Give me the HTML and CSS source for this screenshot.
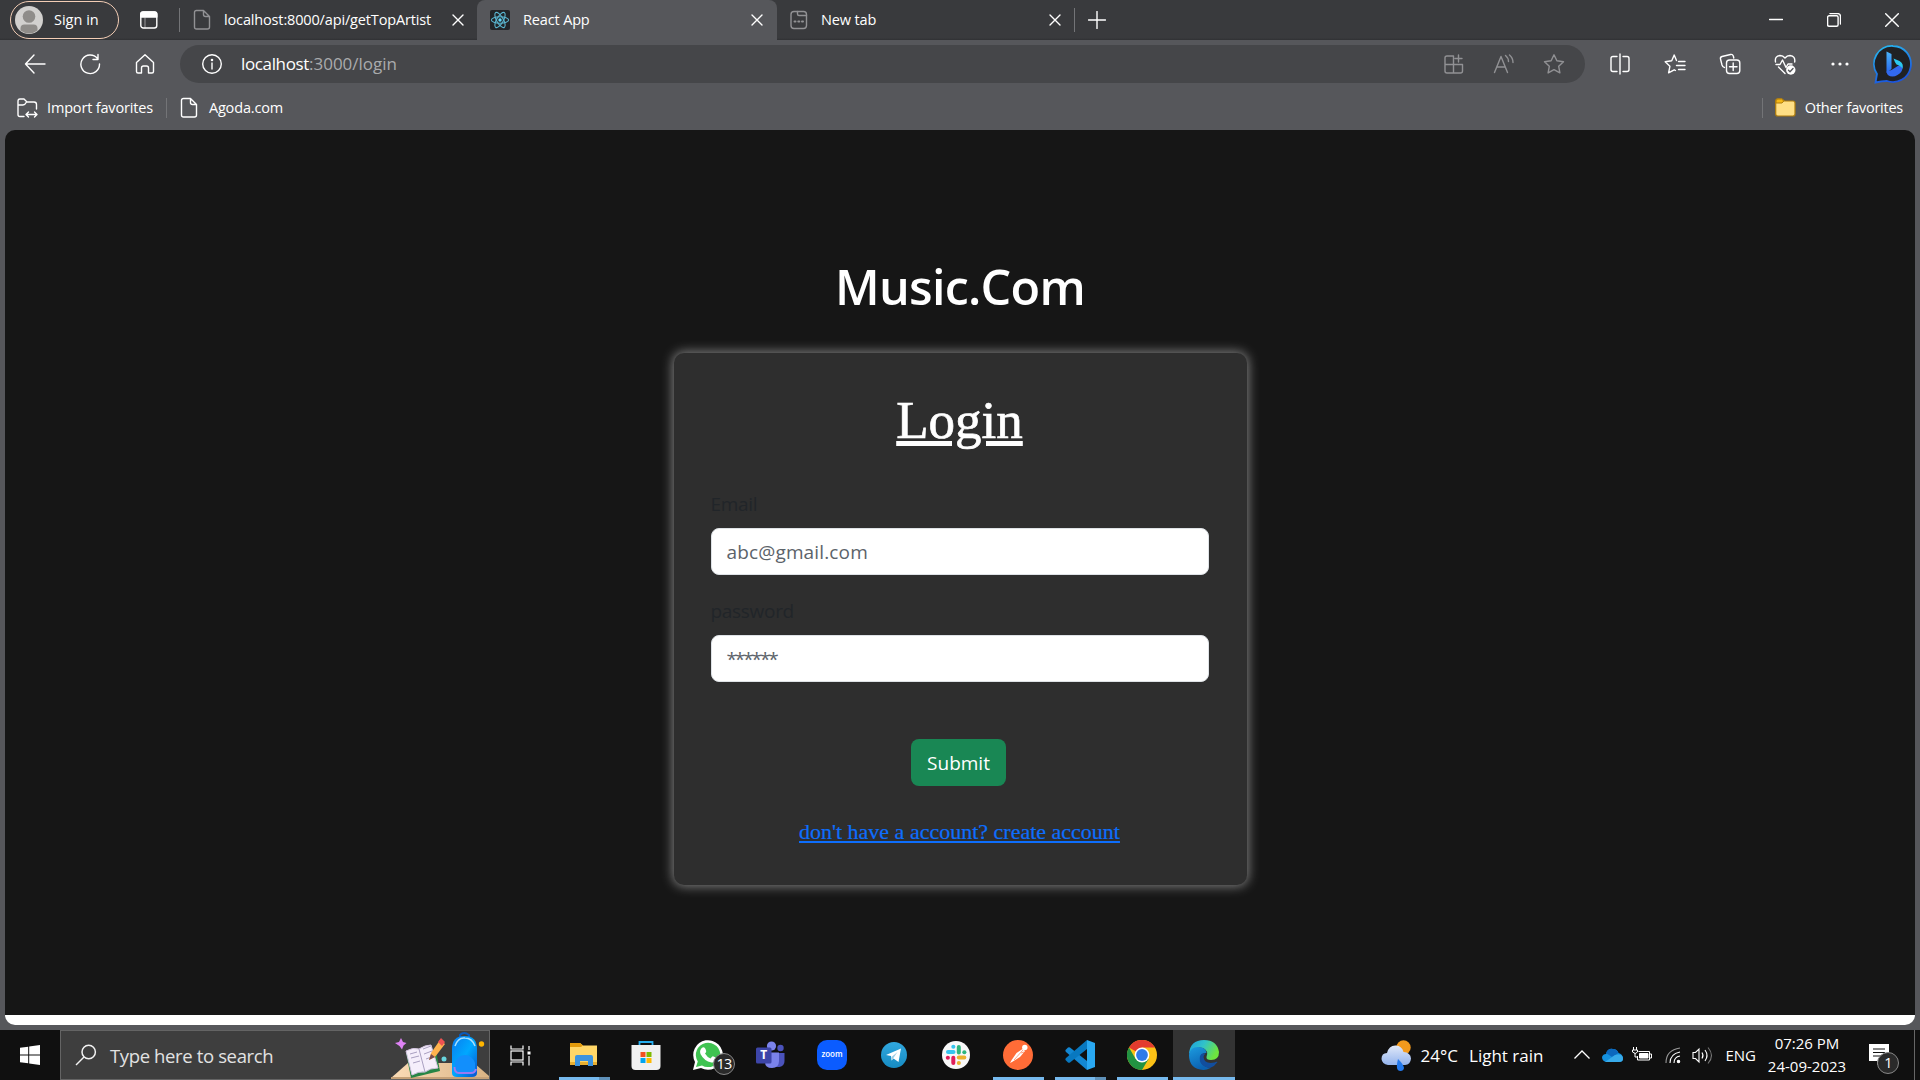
FILE: index.html
```html
<!DOCTYPE html>
<html lang="en">
<head>
<meta charset="utf-8">
<title>React App</title>
<link rel="stylesheet" href="styles.css">
</head>
<body>
<div class="tabs">
  <button class="profile"><svg width="28" height="28" viewBox="0 0 28 28"><circle cx="14" cy="14" r="14" fill="#d2d0ce"/><circle cx="14" cy="10.500" r="6.300" fill="#8f8c89"/><path d="M5.500 24.500v-2q0-4 4-4h9q4 0 4 4v2A14 14 0 0 1 5.500 24.500z" fill="#8f8c89"/></svg><span class="t-signin">Sign in</span></button>
  <svg class="tabmenu ic" width="20" height="20" viewBox="0 0 20 20"><rect x="1.800" y="2" width="16" height="16" rx="2.500"/><path d="M1.800 7V4.500Q1.800 2 4.300 2h11q2.500 0 2.500 2.500V7z" fill="#fff"/><path d="M6 8v10" opacity=".35"/></svg>
  <i class="sep"></i>
  <div class="tab first"><svg class="ic dim" width="18" height="22" viewBox="0 0 18 22"><path d="M3.500 1.500h7l6 6v10.500q0 2-2 2h-11q-2 0-2-2v-14.500q0-2 2-2zM10.500 1.500v4q0 2 2 2h4"/></svg><span class="t-tab1">localhost:8000/api/getTopArtist</span><svg class="ic close" width="12" height="12" viewBox="0 0 12 12"><path d="M1 1l10 10M11 1L1 11"/></svg></div>
  <div class="tab active"><svg width="20" height="20" viewBox="0 0 20 20"><rect width="20" height="20" rx="2" fill="#222428"/><g fill="none" stroke="#5ab5d0" stroke-width="1.100"><ellipse cx="10" cy="10" rx="8.600" ry="3.300"/><ellipse cx="10" cy="10" rx="8.600" ry="3.300" transform="rotate(60 10 10)"/><ellipse cx="10" cy="10" rx="8.600" ry="3.300" transform="rotate(120 10 10)"/></g><circle cx="10" cy="10" r="1.700" fill="#61dafb"/></svg><span class="t-tab2">React App</span><svg class="ic close" width="12" height="12" viewBox="0 0 12 12"><path d="M1 1l10 10M11 1L1 11"/></svg></div>
  <div class="tab last"><svg class="ic dim" width="20" height="20" viewBox="0 0 20 20"><rect x="2" y="1.500" width="15.500" height="17" rx="3"/><path d="M8.500 1.500v2.500q0 1.500 1.500 1.500h7.500"/><path d="M5.500 11.500h1M9.300 11.500h1M13 11.500h1" stroke-width="2"/></svg><span class="t-tab3">New tab</span><svg class="ic close" width="12" height="12" viewBox="0 0 12 12"><path d="M1 1l10 10M11 1L1 11"/></svg></div>
  <i class="sep"></i>
  <svg class="ic plus" width="18" height="18" viewBox="0 0 18 18"><path d="M9 .5v17M.5 9h17"/></svg>
  <div class="winctl">
    <svg class="ic" width="14" height="14" viewBox="0 0 14 14"><path d="M.5 6.500h13"/></svg>
    <svg class="ic" width="14" height="14" viewBox="0 0 14 14"><rect x=".6" y="2.800" width="10.500" height="10.500" rx="1.500"/><path d="M3 .6h7.500q3 0 3 3V11"/></svg>
    <svg class="ic" width="14" height="14" viewBox="0 0 14 14"><path d="M.7.7l12.600 12.600M13.300.7L.7 13.300"/></svg>
  </div>
</div>

<div class="toolbar">
  <div class="nav">
    <svg class="ic" width="22" height="22" viewBox="0 0 22 22"><path d="M21 11H1.500M10 2L1.500 11l8.500 9"/></svg>
    <svg class="ic" width="22" height="22" viewBox="0 0 22 22"><path d="M18.500 5.500A9.300 9.300 0 1 0 20.500 11M19 1.500v5h-5"/></svg>
    <svg class="ic" width="22" height="22" viewBox="0 0 22 22"><path d="M2.500 9.500L11 1.800l8.500 7.700V18.500q0 1.500-1.500 1.500h-3.500v-5q0-2-2-2h-3q-2 0-2 2v5H4q-1.500 0-1.500-1.500z"/></svg>
  </div>
  <div class="address">
    <svg class="ic" width="22" height="22" viewBox="0 0 22 22"><circle cx="11" cy="11" r="9.300"/><path d="M11 10v6"/><circle cx="11" cy="7" r=".6" fill="#fff"/></svg>
    <span class="url"><b class="t-host">localhost</b><span class="t-path">:3000/login</span></span>
    <div class="pageacts">
      <svg class="ic dim" width="22" height="22" viewBox="0 0 22 22"><path d="M10.500 3H4Q2 3 2 5v13q0 2 2 2h13.500q2 0 2-2v-6.500H2M10.500 3v17M15.500 2v7M12 5.500h7"/></svg>
      <svg class="ic dim" width="22" height="22" viewBox="0 0 22 22"><path d="M1.500 19.500L8 3.500l6.500 16M4 14h8M12.500 2.500q3 2.500 3 6M16.500 2q3.500 3 3.500 7.500"/></svg>
      <svg class="ic dim" width="22" height="22" viewBox="0 0 22 22"><path d="M11 1.800l2.900 6 6.600.9-4.800 4.600 1.200 6.600-5.900-3.200-5.900 3.200 1.200-6.600L1.500 8.700l6.600-.9z"/></svg>
    </div>
  </div>
  <div class="acts">
    <svg class="ic" width="22" height="22" viewBox="0 0 22 22"><path d="M8 3.500H4q-2 0-2 2v11q0 2 2 2h4M14 3.500h4q2 0 2 2v11q0 2-2 2h-4M11 1v20"/></svg>
    <svg class="ic" width="22" height="22" viewBox="0 0 22 22"><path d="M12.500 7.500L10.200 2 7.700 7.700 1.200 8.700l4.700 4.600-1.300 6.500 5.600-3 1.300.7M14.500 8.500H21M12.500 12.500H21M14.500 16.500H21"/></svg>
    <svg class="ic" width="22" height="22" viewBox="0 0 22 22"><path d="M5.500 14.500Q3.800 14.500 3 12L1.500 6Q1 4.200 3 3.500l8.500-2q2-.5 2.800 1.500l.5 2"/><rect x="7.500" y="7" width="13.300" height="13.500" rx="3"/><path d="M14.200 10v7.500M10.500 13.800H18"/></svg>
    <svg class="ic" width="22" height="22" viewBox="0 0 22 22"><path d="M1.500 9Q.5 3 6 2.500q3 0 5 2.500 2-2.500 5-2.500 5.500.5 4.700 6.500M2 11.500h4l2.500-4.500 3.500 7.500 2-3.500h4M4.500 14l6.500 6.500"/><circle cx="16.800" cy="17" r="4.700" fill="#fff" stroke="none"/><path d="M14.500 17.200l1.500 1.500 3-3.200" stroke="#55565a"/></svg>
    <svg width="22" height="22" viewBox="0 0 22 22" fill="#fff"><circle cx="4" cy="11" r="1.600"/><circle cx="11" cy="11" r="1.600"/><circle cx="18" cy="11" r="1.600"/></svg>
  </div>
  <svg class="bing" width="40" height="40" viewBox="0 0 40 40"><defs><linearGradient id="bo" x1="0" y1="0" x2=".4" y2="1"><stop offset="0" stop-color="#27c0f2"/><stop offset="1" stop-color="#1b55dd"/></linearGradient><linearGradient id="bb" x1="0" y1="0" x2="0" y2="1"><stop offset="0" stop-color="#4ab4fa"/><stop offset="1" stop-color="#2868ec"/></linearGradient></defs><path d="M20 2a18 18 0 1 1-6 35q-5 0-11.500 1.500L4 30A18 18 0 0 1 20 2z" fill="#202124" stroke="url(#bo)" stroke-width="1.800"/><path d="M13.500 7.500l5 2.500v15l-5 4z" fill="url(#bb)"/><path d="M13.500 27.500q.5 5 6 5 2.500 0 5-1.500 5-3 5-7.500 0-2-1.500-3.500l-9.500 6z" fill="#3269ef"/><path d="M20.500 14.500l6 2.500q4.500 2.500 3 8-1-3-6-4.500-1.500-1.500-3-6z" fill="#2bc8ef"/></svg>
</div>

<div class="favs">
  <svg class="ic" width="22" height="22" viewBox="0 0 22 22"><path d="M8 19.500H4q-2 0-2-2V4.500q0-2.500 2-2.500h4l3 3h7q2.500 0 2.500 2.500V12M2 8h5q2 0 3.500-3M10.500 17.500h10M12.500 15l-2.500 2.500 2.500 2.500M18.500 15l2.500 2.500-2.500 2.500"/></svg>
  <span class="t-imp">Import favorites</span><i class="sep"></i>
  <svg class="ic" width="18" height="22" viewBox="0 0 18 22"><path d="M3.500 1.500h7l6 6v10.500q0 2-2 2h-11q-2 0-2-2v-14.500q0-2 2-2zM10.500 1.500v4q0 2 2 2h4"/></svg>
  <span class="t-ago">Agoda.com</span>
  <div class="otherfav"><i class="sep"></i><svg width="21" height="19" viewBox="0 0 21 19"><path d="M.7 3q0-2.200 2-2.200h4L9.500 3H18q2 0 2 2v11q0 2-2 2H2.700q-2 0-2-2z" fill="#ffdf85" stroke="#b07d0c" stroke-width="1.200"/><path d="M1 5V3q0-2 2-2h3.500l2.300 2L7 5z" fill="#f5b817" stroke="#b07d0c"/></svg><span class="t-oth">Other favorites</span></div>
</div>

<main class="page">
  <h1 class="brand"><span class="t-brand">Music.Com</span></h1>
  <form class="card">
    <h2><span class="t-login">Login</span></h2>
    <label><span class="t-email">Email</span></label>
    <div class="input"><span class="t-abc">abc@gmail.com</span></div>
    <label><span class="t-pass">password</span></label>
    <div class="input"><span class="t-star">******</span></div>
    <button type="button" class="submit"><span class="t-sub">Submit</span></button>
    <a class="signup"><span class="t-link">don't have a account? create account</span></a>
  </form>
</main>

<footer class="taskbar">
  <div class="start"><svg width="20" height="20" viewBox="0 0 20 20" fill="#fff"><path d="M0 2.800L8.200 1.700v7.800H0zM9.200 1.500L20 0v9.500H9.200zM0 10.500h8.200v7.800L0 17.200zM9.200 10.500H20V20L9.200 18.500z"/></svg></div>
  <div class="search">
    <svg width="22" height="22" viewBox="0 0 22 22" fill="none" stroke="#f2f2f2" stroke-width="1.500"><circle cx="13.700" cy="8" r="6.700"/><path d="M9 13L1 21"/></svg>
    <span class="t-search">Type here to search</span>
    <svg class="art" width="98" height="48" viewBox="0 0 98 48"><defs><linearGradient id="dk" x1="0" x2="1"><stop offset="0" stop-color="#fbdcb7"/><stop offset="1" stop-color="#d9b384"/></linearGradient><linearGradient id="bp" x1="0" y1="0" x2="1" y2="1"><stop offset="0" stop-color="#0a7bee"/><stop offset=".5" stop-color="#00a8ff"/><stop offset="1" stop-color="#0754cf"/></linearGradient></defs><path d="M0 47L17 32h66l15 13v3H0z" fill="url(#dk)"/><path d="M0 46h98v2H0z" fill="#c6a177"/><path d="M10 7l2 4 3.500 1-3 2.500-1.500 4-2.500-3.500L4 12l4-1z" fill="#df83f5"/><path d="M15 22l5 25 29-7-4-20z" fill="#278545"/><path d="M15 20q7-4 13-2 6-4 12-4l7 23q-8 0-13 4-6-1-13 3z" fill="#f5eefb" stroke="#d2c3df"/><path d="M28 18l6 23M19 23l7-2M20 27l8-2M22 32l7-2M32 18l8-3M33 23l8-3M35 28l8-3" stroke="#aaa0c1" fill="none"/><path d="M38 29l2-7L49 9l5 4-10 13z" fill="#ffb34e"/><path d="M38 29l2-6 4 3z" fill="#784c51"/><path d="M47 11l3-4 4 4-3 4z" fill="#f05252"/><circle cx="53" cy="28" r="2.500" fill="#68d5df"/><path d="M69 7V4q4-4 9 0v3" fill="none" stroke="#0b59b9" stroke-width="2"/><path d="M61 42V18q0-13 12.500-13T86 18v24q0 4-5 4H66q-5 0-5-4z" fill="url(#bp)"/><path d="M64 15q3-9 10-8 7 0 10 8" fill="none" stroke="#a7e0ff" stroke-width="1.500"/><path d="M64 40v-9q3-7 10-7t10 8v8q-10 4-20 0z" fill="#128ffc"/><path d="M63.500 36q0 6 4.500 6h12q4 0 5-4" fill="none" stroke="#9a7af2" stroke-width="2"/><circle cx="90.500" cy="13" r="2.700" fill="#ffb500"/></svg>
  </div>
  <div class="app tv"><svg width="21" height="21" viewBox="0 0 21 21" fill="none" stroke="#fff" stroke-width="1.200"><path d="M1 .5V4h12V.5M1 20.500V17h12v3.500"/><rect x="1" y="6" width="12" height="9"/><path d="M19 1v4M19 11v9.500"/><path d="M17.500 8h3" stroke-width="3"/></svg></div>
  <div class="app run multi"><svg width="30" height="30" viewBox="0 0 30 30"><path d="M1 3h10l3 2.500h14V25H1z" fill="#ffd667"/><path d="M1 3h10l3 2.500L12 7H1z" fill="#e29a0b"/><path d="M1 22h27v3H1z" fill="#e9af31"/><path d="M6 26V17q0-2 2-2h14q2 0 2 2v9h-5v-5h-8v5z" fill="#3c93df"/></svg></div>
  <div class="app"><svg width="30" height="30" viewBox="0 0 30 30"><path d="M8.500 7V2h13v5" fill="none" stroke="#27aeef" stroke-width="1.800"/><path d="M.5 5h29v21q0 4-4 4h-21q-4 0-4-4z" fill="#f0f0f0"/><path d="M9.500 12h5v5h-5z" fill="#f25022"/><path d="M15.500 12h5v5h-5z" fill="#7fba00"/><path d="M9.500 18h5v5h-5z" fill="#00a4ef"/><path d="M15.500 18h5v5h-5z" fill="#ffb900"/></svg></div>
  <div class="app"><svg width="30" height="30" viewBox="0 0 30 30"><path d="M0 30l2-8A14.800 14.800 0 1 1 8 28z" fill="#fff"/><path d="M3 27l1.800-5.500A12.200 12.200 0 1 1 9 25.500z" fill="#3fc351"/><path d="M9.500 7.500q2-1 3 1.500l.7 2q.3 1-1.200 2.500 2 3.500 5.500 5l1.500-1.700q.7-.8 1.500-.3l3 1.500q.7.400 0 2-1.500 3-5 2.500Q11 21 7.500 14 6 10 9.500 7.500z" fill="#fff"/></svg><span class="badge">13</span></div>
  <div class="app"><svg width="30" height="30" viewBox="0 0 30 30"><circle cx="25.500" cy="8" r="3.200" fill="#4b53bc"/><path d="M20 13h9.500v8q0 5-5 6h-4.500z" fill="#4b53bc"/><circle cx="16.500" cy="6" r="4.600" fill="#7b83eb"/><path d="M10 12.500h14V21q0 7-7 7t-7-6z" fill="#7b83eb"/><rect x="1" y="7.500" width="15.500" height="16" rx="1.500" fill="#3d45a8"/><text x="8.800" y="19.300" class="teamst">T</text></svg></div>
  <div class="app"><svg width="30" height="30" viewBox="0 0 30 30"><rect width="30" height="30" rx="10" fill="#0b5cff"/><text x="15" y="17.200" class="zoomt">zoom</text></svg></div>
  <div class="app"><svg width="26" height="26" viewBox="0 0 26 26"><defs><linearGradient id="tg" x2="0" y2="1"><stop stop-color="#31a8df"/><stop offset="1" stop-color="#168bc2"/></linearGradient></defs><circle cx="13" cy="13" r="13" fill="url(#tg)"/><path d="M5 13l15-6.500-2.500 13.500-5-3.500-2 2-.5-4.500z" fill="#fff"/><path d="M10.500 15l6-5-4.300 6.200-1.700 2.300z" fill="#9ccbe4"/></svg></div>
  <div class="app"><svg width="28" height="28" viewBox="0 0 28 28"><circle cx="14" cy="14" r="14" fill="#f8f8f8"/><g stroke-width="4" stroke-linecap="round"><path d="M6 11h5.500" stroke="#36c5f0"/><path d="M11.300 5.700h.1" stroke="#36c5f0"/><path d="M16.800 6v5.500" stroke="#2eb67d"/><path d="M22.300 11.200h.1" stroke="#2eb67d"/><path d="M16.800 16.500h5.500" stroke="#ecb22e"/><path d="M16.800 22h.1" stroke="#ecb22e"/><path d="M11.300 16.800V22" stroke="#e01e5a"/><path d="M5.800 16.800h.1" stroke="#e01e5a"/></g></svg></div>
  <div class="app run"><svg width="30" height="30" viewBox="0 0 30 30"><circle cx="15" cy="15" r="15" fill="#ff6c37"/><circle cx="21.800" cy="7.500" r="2.700" fill="#fff"/><path d="M19.500 9l2.500 2-5 6-8 5-2 1 2-3.500 4.500-6.500z" fill="#fff"/><path d="M20 10l-9 10M18 13l3-1" stroke="#ff8a62" stroke-width=".8"/></svg></div>
  <div class="app run multi"><svg width="30" height="30" viewBox="0 0 30 30"><path d="M.5 10L3 7.500q1-.5 2 0L22 21v9L1 12q-1-1-.5-2z" fill="#1387d2"/><path d="M.5 20L3 22.500q1 .5 2 0L22 9V0L1 18q-1 1-.5 2z" fill="#0878c0"/><path d="M22 0l8 3v24l-8 3z" fill="#29a8f2"/></svg></div>
  <div class="app run"><svg width="30" height="30" viewBox="0 0 30 30"><circle cx="15" cy="15" r="15" fill="#fbc116"/><path d="M15 15L2 7.500A15 15 0 0 1 28 7.500H15z" fill="#e33b2e"/><path d="M2 7.500A15 15 0 0 0 15 30l6.500-11L15 15 8.500 18.800z" fill="#229342"/><circle cx="15" cy="15" r="7.400" fill="#fff"/><circle cx="15" cy="15" r="5.900" fill="#307bea"/></svg></div>
  <div class="app run current"><svg width="30" height="30" viewBox="0 0 30 30"><defs><linearGradient id="eg" x2="1" y2=".4"><stop stop-color="#1b9fe0"/><stop offset=".5" stop-color="#31c2c9"/><stop offset="1" stop-color="#6ee63e"/></linearGradient><linearGradient id="eb" x2=".4" y2="1"><stop stop-color="#1c9bdf"/><stop offset="1" stop-color="#0b62b2"/></linearGradient></defs><path d="M0 14Q1 0 15 0q13 0 15 12 0 8-8 8-5 0-4.500-3Q20 11 14 8 6 6 0 14z" fill="url(#eg)"/><path d="M0 15Q1 7 9 7q8 0 8.500 6-6-1-6 6 1 8 10 9-4 2-7 2Q0 29 0 15z" fill="url(#eb)"/><path d="M11 16q-2 10 10 12 5-2 7.500-6-1-.5-3 .5-10 2-11-5.500 0-2 2-3.500-4-1-5.500 2.500z" fill="#124e9e"/></svg></div>
  <div class="tray">
    <svg class="weather" width="31" height="31" viewBox="0 0 31 31"><defs><linearGradient id="cl" x2="0" y2="1"><stop stop-color="#e1e9f9"/><stop offset="1" stop-color="#94b4ed"/></linearGradient></defs><circle cx="22.500" cy="7.500" r="7.200" fill="#f39a1c"/><path d="M7 25q-6-1-6.500-6 0-6 5.500-6 2-8 9-7.500 6 .5 7.500 6.500 7 .5 7.500 6.500-.5 6-6 6.500z" fill="url(#cl)"/><path d="M17 19q6 6 6 9-.5 3-3.500 3T16 28q-.5-3 1-9z" fill="#2379ed"/></svg>
    <span class="t-temp">24°C</span><span class="t-rain">Light rain</span>
    <svg class="chev" width="16" height="16" viewBox="0 0 16 16" fill="none" stroke="#fff" stroke-width="1.300"><path d="M.5 11.500L8 4l7.500 7.500"/></svg>
    <svg class="od" width="21" height="15" viewBox="0 0 21 15"><path d="M4 6Q6 0 11 1q4 0 5.500 4 4 1 4.500 5 0 4-4 4H4q-4-1-4-5 1-3 4-3z" fill="#1491df"/><path d="M4 5Q6 0 11 1q4 0 5.500 4L10 9z" fill="#0c68be"/><path d="M3 14l10-7q8-2 8 4 0 3-4 3z" fill="#38abea"/></svg>
    <svg class="bat" width="20" height="16" viewBox="0 0 20 16" fill="none" stroke="#fff"><path d="M6.500 4.500h11v8.500h-12V9M18 7h1.500v4H18M1.500 0v3M4.500 0v3M.5 3h5v2q-2 3-5 0zM3 6v4h3"/><path d="M7.500 6.500h8.500V11H7.500z" fill="#fff"/></svg>
    <svg class="wifi" width="16" height="17" viewBox="0 0 16 17" fill="none" stroke="#fff" stroke-width="1.100"><path d="M5 16Q5 7 15 5M9 16q0-6 6-7" /><path d="M1 16Q1 3 15 1" stroke="#999"/><circle cx="13.500" cy="14.500" r="1.200" fill="#fff"/></svg>
    <svg class="vol" width="21" height="19" viewBox="0 0 21 19" fill="none" stroke="#fff" stroke-width="1.100"><path d="M1 6.500h2.500L7 3v13l-3.500-3.500H1zM10 6.500q2 3 0 6M13 4q4 5.500 0 11"/><path d="M16 1.500q7 8 0 16" stroke="#777"/></svg>
    <span class="t-eng">ENG</span>
    <div class="clock"><span class="t-time">07:26 PM</span><span class="t-date">24-09-2023</span></div>
    <div class="note"><svg width="20" height="22" viewBox="0 0 20 22"><path d="M0 0h20v17h-8l-4 4v-4H0z" fill="#fff"/><path d="M4 5h12M4 8.500h12M4 12h8" stroke="#111" stroke-width="1.200"/></svg><span class="badge">1</span></div>
    <i class="peek"></i>
  </div>
</footer>
</body>
</html>
```
FILE: styles.css
```css
* { box-sizing: border-box; }
body { margin: 0; width: 1920px; height: 1080px; overflow: hidden; background: #56575b; color: #fff; font-family: "Open Sans", "Noto Sans", sans-serif; font-size: 15px; white-space: nowrap; display: flex; flex-direction: column; }
svg { flex: none; display: block; }
button { font: inherit; color: inherit; background: none; border: 0; }
.ic { fill: none; stroke: #fff; stroke-width: 1.4; stroke-linecap: round; stroke-linejoin: round; }
.dim { stroke: #919194; }
.sep { flex: none; width: 1px; height: 24px; background: #737477; }

.tabs { height: 40px; background: linear-gradient(#393a3d 38px, #303134); display: flex; align-items: center; font-size: 14.5px; letter-spacing: -0.15px; }
.tabs span { position: relative; top: -1px; }
.profile { width: 109px; height: 38px; margin-left: 10px; border: 1.5px solid #f3cdb5; border-radius: 19px; padding: 0 0 0 4px; display: flex; align-items: center; gap: 11px; }
.tabmenu { margin: 0 20px 0 20px; }
.tab { height: 40px; display: flex; align-items: center; }
.tab .close { margin-left: auto; }
.first { width: 297px; padding: 0 13px 0 13px; gap: 13px; }
.active { width: 300px; padding: 0 14px 0 13px; gap: 13px; background: #56575b; border-radius: 8px 8px 0 0; }
.last { width: 297px; padding: 0 13px 0 12px; gap: 12px; }
.plus { margin-left: 13px; }
.winctl { margin-left: auto; display: flex; gap: 44px; padding-right: 21px; }

.toolbar { height: 48px; display: flex; align-items: center; padding-bottom: 1px; }
.nav { width: 180px; padding-left: 24px; display: flex; gap: 33px; }
.address { width: 1405px; height: 38px; border-radius: 19px; background: #454649; display: flex; align-items: center; padding: 0 20px 0 21px; font-size: 17px; }
.url { margin-left: 18px; }
.url b { font-weight: 400; letter-spacing: -0.36px; }
.url span { color: #aaabad; }
.pageacts { margin-left: auto; display: flex; gap: 28px; }
.acts { display: flex; gap: 33px; margin-left: 24px; }
.bing { margin-left: 22px; }

.favs { height: 42px; display: flex; align-items: center; padding: 0 17px 3px 16px; font-size: 14.5px; letter-spacing: -0.17px; }
.favs .sep { height: 20px; }
.t-imp { margin: 0 13px 0 9px; }
.favs > .sep + svg { margin-left: 13px; }
.t-ago { margin-left: 11px; }
.otherfav { margin-left: auto; display: flex; align-items: center; letter-spacing: -0.25px; }
.otherfav svg { margin-left: 12px; }
.t-oth { margin-left: 9px; }

.page { width: 1910px; height: 895px; margin: 0 5px 5px; background: #161616; border-radius: 10px; border-bottom: 10px solid #fff; display: flex; flex-direction: column; align-items: center; }
.brand { margin: 121px 0 0; height: 102px; line-height: 70px; font-size: 48.5px; font-weight: 600; letter-spacing: -0.75px; }
.card { width: 573px; height: 532px; background: #2e2e2e; border-radius: 10px; box-shadow: 0 0 12px 1px #888; padding: 37px 38px 0 37px; display: flex; flex-direction: column; }
h2 { margin: 0; height: 98px; line-height: 60px; text-align: center; font-family: "Liberation Serif", serif; font-weight: 400; font-size: 53px; -webkit-text-stroke: 0.7px #fff; text-decoration: underline; text-decoration-thickness: 5px; text-underline-offset: 3px; }
.card label { height: 40px; padding-top: 1px; font-size: 19px; line-height: 30px; letter-spacing: -0.3px; color: #212529; }
.input { height: 47px; margin-bottom: 20px; background: #fff; border: 1px solid #dee2e6; border-radius: 8px; padding: 0 15px; color: #5c636a; font-size: 19px; line-height: 46px; letter-spacing: 0.15px; }
.t-star { letter-spacing: -2.1px; }
.submit { align-self: center; width: 95px; height: 47px; margin: 37px 2px 0 0; padding: 1px 0 0; background: #198754; border-radius: 8px; font-size: 19px; }
.signup { margin-top: 31px; text-align: center; font-family: "Liberation Serif", serif; font-size: 22px; line-height: 30px; color: #0d6efd; -webkit-text-stroke: 0.2px #0d6efd; text-decoration: underline; text-decoration-thickness: 2px; text-underline-offset: 2px; text-decoration-skip-ink: none; }

.taskbar { height: 50px; background: #101010; display: flex; align-items: center; }
.start { width: 60px; padding-left: 20px; }
.search { width: 430px; height: 50px; border: 1px solid #646464; background: #3e3e3e; display: flex; align-items: center; padding-left: 14px; font-size: 18.5px; letter-spacing: -0.37px; color: #e2e2e2; }
.t-search { margin-left: 13px; }
.art { margin-left: auto; }
.app { position: relative; width: 62px; height: 50px; display: flex; align-items: center; justify-content: center; }
.tv { width: 63px; padding-right: 2px; }
.run::after { content: ""; position: absolute; left: 6px; bottom: 0; width: 51px; height: 3px; background: #76b9ed; }
.multi::after { background: linear-gradient(90deg, #76b9ed 40px, #5f91b9 40px); }
.current { background: #333; }
.current::after { left: 0; width: 62px; }
.badge { position: absolute; left: 36px; top: 23px; width: 22px; height: 22px; border: 1px solid #878787; border-radius: 11px; background: #2a2a2a; font-size: 14.5px; line-height: 19px; text-align: center; letter-spacing: -0.7px; }
.teamst { font: bold 12px "Open Sans", sans-serif; fill: #fff; text-anchor: middle; }
.zoomt { font: 600 8px "Open Sans", sans-serif; fill: #fff; text-anchor: middle; }
.tray { margin-left: auto; height: 50px; display: flex; align-items: center; }
.tray > * { flex: none; }
.t-temp, .t-rain { font-size: 17px; }
.t-temp { margin: 0 11px 0 9px; }
.chev { margin: 0 12px 0 31px; }
.bat { margin: 0 13px 0 9px; }
.vol { margin: 0 12px 0 11px; }
.clock { width: 76px; margin-left: 13px; display: flex; flex-direction: column; align-items: center; line-height: 23px; }
.note { position: relative; width: 20px; margin-left: 24px; }
.note .badge { left: 8px; top: 8px; }
.peek { width: 1px; height: 50px; background: #666; margin: 0 5px 0 25px; }
```
